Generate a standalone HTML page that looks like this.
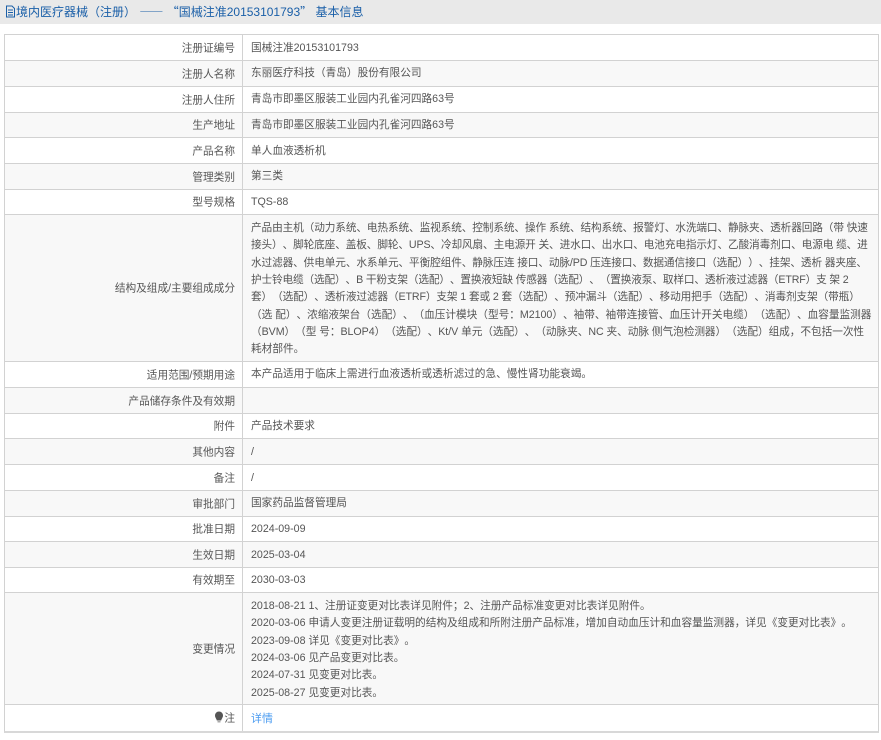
<!DOCTYPE html>
<html lang="zh"><head><meta charset="utf-8">
<style>
html,body{margin:0;padding:0;background:#fff}
body{width:881px;height:740px;overflow:hidden;position:relative;font-family:"Liberation Sans","Noto Sans CJK SC",sans-serif;font-size:10.67px;color:#555;text-spacing-trim:space-all;font-kerning:none}
#hd{position:absolute;left:0;top:0;width:881px;height:24px;background:#e9e9e9;color:#1a5fa8;font-size:12px;line-height:21px;white-space:pre}
#hd svg{position:absolute;left:5px;top:5px}
#hd span.t{position:absolute;left:16px;top:1px}
#hd i{font-style:normal;font-family:"Noto Sans CJK SC",sans-serif}
#hd i.d{font-weight:bold}
.r{position:absolute;left:4px;width:875px;box-sizing:border-box;border-top:1px solid #d2d2d2;border-left:1px solid #d2d2d2;border-right:1px solid #d2d2d2}
.e{background:#f8f8f8}
.l{position:absolute;left:0;width:230px;text-align:right;top:0;bottom:0;white-space:nowrap}
.l b{font-weight:normal;position:absolute;right:0;top:50%;transform:translateY(calc(-50% + 1px));line-height:17px}
.v{position:absolute;left:237px;top:0;bottom:0;border-left:1px solid #d2d2d2;width:636px}
.v div{position:absolute;left:8px;white-space:pre;line-height:17px;margin-top:1px}
.v div.m{line-height:17.33px}
</style></head><body>
<div id="hd"><svg width="11" height="13" viewBox="0 0 11 13" fill="none" stroke="#1a5fa8" stroke-width="1"><path d="M1.500 1h5.500l2.500 2.500v8.500h-8z M3 5h5 M3 7.500h5 M3 10h5"/></svg><span class="t">境内医疗器械（注册） <i class="d">——</i> <i>“</i>国械注准20153101793<i>”</i> 基本信息</span></div>

<div class="r" style="top:34px;height:26px"><div class="l"><b>注册证编号</b></div><div class="v"><div style="top:4px">国械注准20153101793</div></div></div>
<div class="r e" style="top:60px;height:26px"><div class="l"><b>注册人名称</b></div><div class="v"><div style="top:3px">东丽医疗科技（青岛）股份有限公司</div></div></div>
<div class="r" style="top:86px;height:26px"><div class="l"><b>注册人住所</b></div><div class="v"><div style="top:3px">青岛市即墨区服装工业园内孔雀河四路63号</div></div></div>
<div class="r e" style="top:112px;height:25px"><div class="l"><b>生产地址</b></div><div class="v"><div style="top:3px">青岛市即墨区服装工业园内孔雀河四路63号</div></div></div>
<div class="r" style="top:137px;height:26px"><div class="l"><b>产品名称</b></div><div class="v"><div style="top:4px">单人血液透析机</div></div></div>
<div class="r e" style="top:163px;height:26px"><div class="l"><b>管理类别</b></div><div class="v"><div style="top:3px">第三类</div></div></div>
<div class="r" style="top:189px;height:25px"><div class="l"><b>型号规格</b></div><div class="v"><div style="top:3px">TQS-88</div></div></div>
<div class="r e" style="top:214px;height:147px"><div class="l"><b>结构及组成/主要组成成分</b></div><div class="v"><div class="m" style="top:4px"><span style="letter-spacing:-.12px">产品由主机（动力系统、电热系统、监视系统、控制系统、操作 系统、结构系统、报警灯、水洗端口、静脉夹、透析器回路（带 快速</span>
<span style="letter-spacing:-.13px">接头）、脚轮底座、盖板、脚轮、UPS、冷却风扇、主电源开 关、进水口、出水口、电池充电指示灯、乙酸消毒剂口、电源电 缆、进</span>
<span style="letter-spacing:-.12px">水过滤器、供电单元、水系单元、平衡腔组件、静脉压连 接口、动脉/PD 压连接口、数据通信接口（选配））、挂架、透析 器夹座、</span>
<span style="letter-spacing:-.15px">护士铃电缆（选配）、B 干粉支架（选配）、置换液短缺 传感器（选配）、（置换液泵、取样口、透析液过滤器（ETRF）支 架 2</span>
<span style="letter-spacing:-.12px">套）（选配）、透析液过滤器（ETRF）支架 1 套或 2 套（选配）、预冲漏斗（选配）、移动用把手（选配）、消毒剂支架（带瓶）</span>
<span style="letter-spacing:-.02px">（选 配）、浓缩液架台（选配）、（血压计模块（型号：M2100）、袖带、袖带连接管、血压计开关电缆）（选配）、血容量监测器</span>
<span style="letter-spacing:-.05px">（BVM）（型 号：BLOP4）（选配）、Kt/V 单元（选配）、（动脉夹、NC 夹、动脉 侧气泡检测器）（选配）组成，不包括一次性</span>
耗材部件。</div></div></div>
<div class="r" style="top:361px;height:26px"><div class="l"><b>适用范围/预期用途</b></div><div class="v"><div style="top:3px">本产品适用于临床上需进行血液透析或透析滤过的急、慢性肾功能衰竭。</div></div></div>
<div class="r e" style="top:387px;height:26px"><div class="l"><b>产品储存条件及有效期</b></div><div class="v"></div></div>
<div class="r" style="top:413px;height:25px"><div class="l"><b>附件</b></div><div class="v"><div style="top:3px">产品技术要求</div></div></div>
<div class="r e" style="top:438px;height:26px"><div class="l"><b>其他内容</b></div><div class="v"><div style="top:4px">/</div></div></div>
<div class="r" style="top:464px;height:26px"><div class="l"><b>备注</b></div><div class="v"><div style="top:4px">/</div></div></div>
<div class="r e" style="top:490px;height:26px"><div class="l"><b>审批部门</b></div><div class="v"><div style="top:3px">国家药品监督管理局</div></div></div>
<div class="r" style="top:516px;height:25px"><div class="l"><b>批准日期</b></div><div class="v"><div style="top:3px">2024-09-09</div></div></div>
<div class="r e" style="top:541px;height:26px"><div class="l"><b>生效日期</b></div><div class="v"><div style="top:4px">2025-03-04</div></div></div>
<div class="r" style="top:567px;height:25px"><div class="l"><b>有效期至</b></div><div class="v"><div style="top:3px">2030-03-03</div></div></div>
<div class="r e" style="top:592px;height:112px"><div class="l"><b>变更情况</b></div><div class="v"><div class="m" style="top:4px">2018-08-21 1、注册证变更对比表详见附件；2、注册产品标准变更对比表详见附件。
2020-03-06 申请人变更注册证载明的结构及组成和所附注册产品标准，增加自动血压计和血容量监测器，详见《变更对比表》。
2023-09-08 详见《变更对比表》。
2024-03-06 见产品变更对比表。
2024-07-31 见变更对比表。
2025-08-27 见变更对比表。</div></div></div>
<div class="r" style="top:704px;height:29px;border-bottom:2px solid #d8d8d8"><div class="l"><b><svg width="8" height="11" viewBox="0 0 8 11" style="vertical-align:-1px;margin-right:1px"><path d="M4 0a4 4 0 0 1 4 4c0 2-1.300 3-1.800 5h-4.400C1.300 7 0 6 0 4a4 4 0 0 1 4-4z" fill="#555"/><path d="M2.500 9.500h3v1.500h-3z" fill="#aaa"/></svg>注</b></div><div class="v"><div style="top:5px;font-size:11px;color:#4a9bf0">详情</div></div></div>
</body></html>
